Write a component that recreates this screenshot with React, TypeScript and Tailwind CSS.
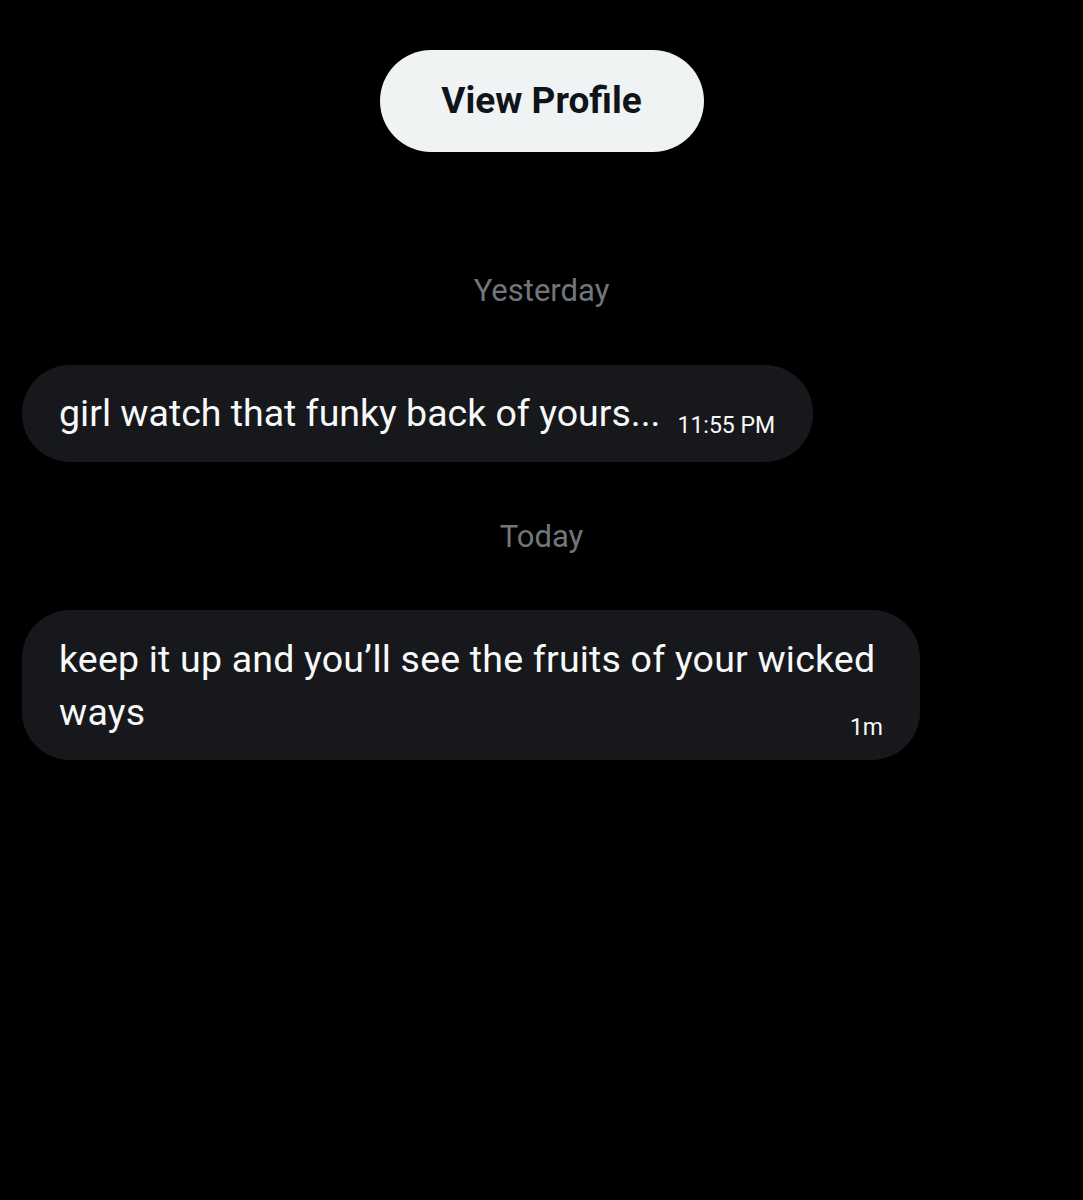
export default function App() {
  return (
    <main
      className="min-h-[1200px] bg-black text-white"
      style={{ fontFamily: "Roboto, 'Noto Sans', sans-serif" }}
    >
      <div className="flex flex-col pt-[50px] px-[22px]">
        <div className="flex justify-center">
          <button className="w-[324px] h-[102px] rounded-full bg-[#eff3f4] text-[#0f1419] text-[37px] font-bold">
            View Profile
          </button>
        </div>

        <div className="mt-[116px] text-center text-[31px] leading-[46px] text-[#71767b]">Yesterday</div>

        <div className="mt-[51px] flex">
          <div className="h-[97px] rounded-[48px] bg-[#17181c] pl-[37px] pr-[38px] flex items-center">
            <span className="text-[37.5px] text-[#f7f9f9]">girl watch that funky back of yours...</span>
            <span className="ml-[17px] mt-[26px] text-[23px] text-[#f7f9f9]">11:55 PM</span>
          </div>
        </div>

        <div className="mt-[52px] text-center text-[31px] leading-[46px] text-[#71767b]">Today</div>

        <div className="mt-[50px] flex">
          <div className="w-[898px] rounded-[48px] bg-[#17181c] pl-[37px] pr-[37px] pt-[23px] pb-[21px] text-[#f7f9f9]">
            <div className="text-[37.5px] leading-[53px] tracking-[0.2px]">
              keep it up and you’ll see the fruits of your wicked
            </div>
            <div className="flex items-end justify-between">
              <span className="text-[37.5px] leading-[53px] tracking-[0.2px]">ways</span>
              <span className="text-[23px] leading-none">1m</span>
            </div>
          </div>
        </div>
      </div>
    </main>
  );
}
